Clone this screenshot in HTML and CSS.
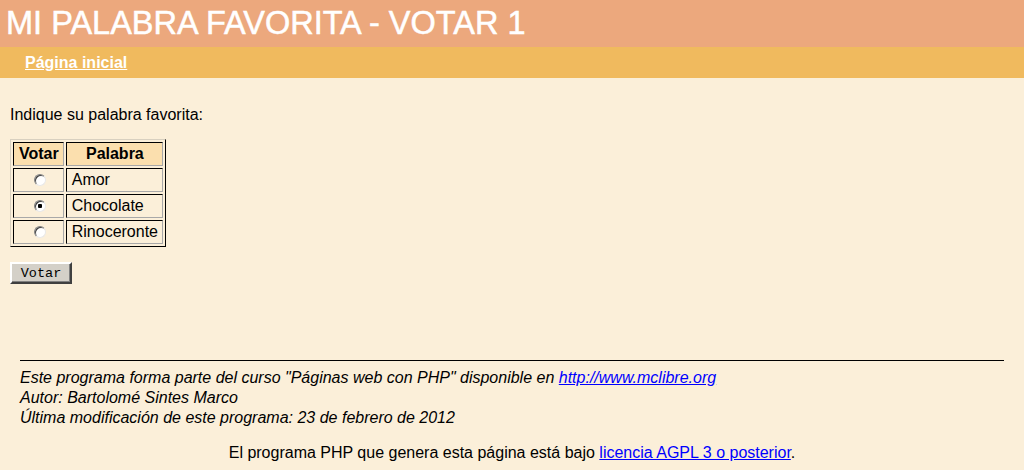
FILE: index.html
```html
<!DOCTYPE html>
<html lang="es">
<head>
<meta charset="utf-8">
<title>Mi palabra favorita - Votar 1</title>
<link rel="stylesheet" href="styles.css">
</head>
<body>
<header class="title-bar">
  <h1 class="title">MI PALABRA FAVORITA - VOTAR 1</h1>
</header>
<nav class="nav-bar">
  <a class="nav-link" href="#">Página inicial</a>
</nav>
<main class="content">
  <form class="vote-form">
    <p class="intro">Indique su palabra favorita:</p>
    <table class="vote-table">
      <thead>
        <tr><th>Votar</th><th>Palabra</th></tr>
      </thead>
      <tbody>
        <tr><td class="c"><input class="radio" type="radio" name="p" value="1"></td><td>Amor</td></tr>
        <tr><td class="c"><input class="radio" type="radio" name="p" value="2" checked></td><td>Chocolate</td></tr>
        <tr><td class="c"><input class="radio" type="radio" name="p" value="3"></td><td>Rinoceronte</td></tr>
      </tbody>
    </table>
    <button class="btn" type="button">Votar</button>
  </form>
</main>
<footer class="footer">
  <hr class="rule">
  <p class="credits">Este programa forma parte del curso "Páginas web con PHP" disponible en <a href="#" class="link">http://www.mclibre.org</a><br>Autor: Bartolomé Sintes Marco<br>Última modificación de este programa: 23 de febrero de 2012</p>
  <p class="license">El programa PHP que genera esta página está bajo <a href="#" class="link">licencia AGPL 3 o posterior</a>.</p>
</footer>
</body>
</html>
```

FILE: styles.css
```css
html, body {
  margin: 0;
  padding: 0;
}
body {
  background: #fbefd9;
  font-family: "Liberation Sans", Arial, sans-serif;
  font-size: 16px;
  color: #000;
}
.title-bar {
  background: #eca87d;
  height: 47px;
  display: flex;
  align-items: center;
}
.title {
  margin: 0;
  padding-left: 6px;
  color: #fff;
  font-weight: normal;
  font-size: 32.5px;
  line-height: 47px;
  -webkit-text-stroke: 0.5px #fff;
}
.nav-bar {
  background: #f0ba5e;
  height: 31px;
  display: flex;
  align-items: center;
  padding-left: 25px;
}
.nav-link {
  color: #fff;
  font-weight: bold;
  font-size: 16px;
  text-decoration: underline;
}
.content {
  padding: 28px 10px 0 10px;
}
.intro {
  margin: 0 0 15px 0;
  line-height: 18px;
}
.vote-table {
  border-collapse: separate;
  border-spacing: 2px;
  border: 1px solid;
  border-color: #d8d0c0 #000 #000 #d8d0c0;
}
.vote-table th,
.vote-table td {
  border: 1px solid;
  border-color: #000 #a8a8a8 #a8a8a8 #000;
  padding: 2px 4px 2px 5px;
  line-height: 18px;
  text-align: left;
}
.vote-table th {
  background: #fbdfae;
  text-align: center;
  font-weight: bold;
}
.vote-table td.c {
  text-align: center;
}
.radio {
  appearance: none;
  -webkit-appearance: none;
  width: 12px;
  height: 12px;
  margin: 0 0 0 2px;
  border-radius: 50%;
  border: 1px solid;
  border-color: #808080 #e8e8e8 #e8e8e8 #808080;
  background: #fff;
  vertical-align: -1px;
  box-shadow: inset 1px 1px 0 #404040;
}
.radio:checked {
  background: radial-gradient(circle, #000 0 2px, #fff 2.5px);
}
.btn {
  display: block;
  margin-top: 15px;
  width: 62px;
  height: 22px;
  padding: 0;
  font-family: "Liberation Mono", "Courier New", monospace;
  font-size: 13.5px;
  color: #000;
  background: #d4d0c8;
  border: 2px solid;
  border-color: #fff #404040 #404040 #fff;
  box-shadow: inset -1px -1px 0 #808080;
}
.footer {
  margin: 76px 20px 0 20px;
}
.rule {
  border: 0;
  border-top: 1px solid #000;
  margin: 0;
}
.credits {
  margin: 7px 0 0 0;
  font-style: italic;
  line-height: 20px;
}
.license {
  margin: 15px 0 0 0;
  text-align: center;
  line-height: 19px;
}
.link {
  color: #0000ff;
}
```
